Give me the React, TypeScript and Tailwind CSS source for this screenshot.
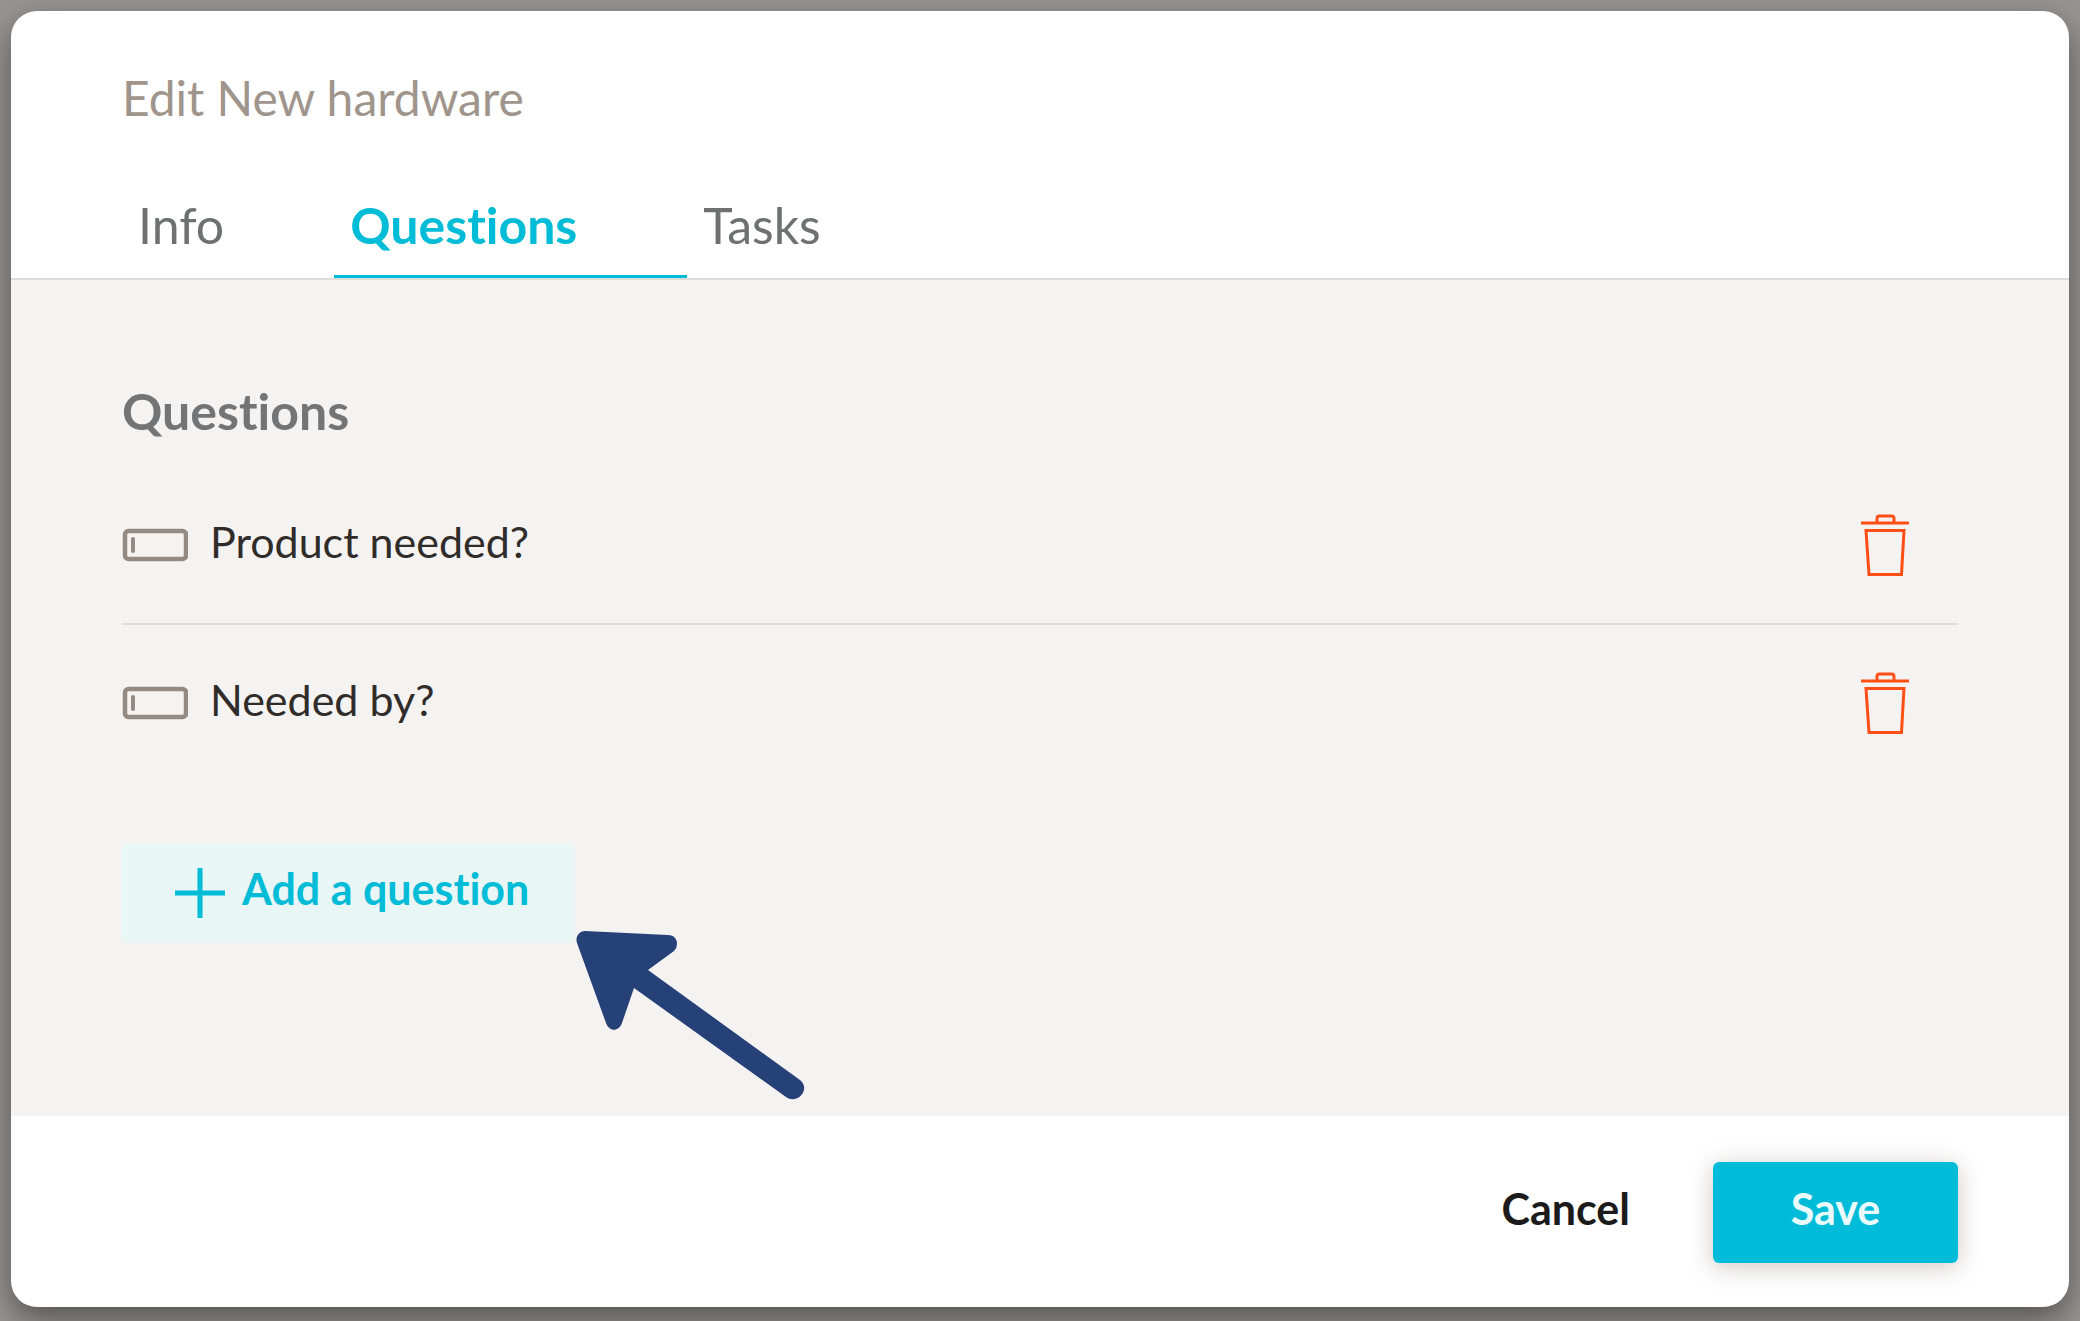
import { useState } from 'react'

type Question = {
  id: number
  label: string
}

const TABS = ['Info', 'Questions', 'Tasks']

const INITIAL_QUESTIONS: Question[] = [
  { id: 1, label: 'Product needed?' },
  { id: 2, label: 'Needed by?' },
]

function TextFieldIcon() {
  return (
    <svg className="h-[34px] w-[66px] shrink-0" viewBox="0 0 66 34" fill="none" stroke="#948a84" aria-hidden="true">
      <rect x="3" y="3" width="61" height="28" rx="3.5" strokeWidth="4.5" />
      <path d="M11 11v12" strokeWidth="4" strokeLinecap="round" />
    </svg>
  )
}

function TrashIcon() {
  return (
    <svg className="h-[64px] w-[50px]" viewBox="0 0 50 64" fill="none" stroke="#ff4f17" strokeWidth="3" aria-hidden="true">
      <path d="M1 10h48" />
      <path d="M17 10V5.500a2.500 2.500 0 0 1 2.500-2.500h12A2.500 2.500 0 0 1 34 5.500V10" />
      <path d="M6 17.500h38l-2.500 44H9z" />
    </svg>
  )
}

function PlusIcon() {
  return (
    <svg className="h-[52px] w-[52px]" viewBox="0 0 52 52" stroke="currentColor" strokeWidth="5" aria-hidden="true">
      <path d="M26 1v50M1 26h50" />
    </svg>
  )
}

// Hint arrow that points at the "Add a question" button
function PointerArrow() {
  return (
    <svg
      className="pointer-events-none absolute top-[88px] left-[454px] h-[170px] w-[230px]"
      viewBox="0 0 230 170"
      fill="#264178"
      aria-hidden="true"
    >
      <path d="M9 0L92 4C98 4 101 8 101 13Q101 17 98 20L72 39L224 149Q229 153 228 159C226 167 217 171 210 166L58 57L46 92C43 101 33 101 30 92L1 12C-1 6 3 0 9 0Z" />
    </svg>
  )
}

export default function App() {
  const [activeTab, setActiveTab] = useState('Questions')
  const [questions, setQuestions] = useState(INITIAL_QUESTIONS)

  function removeQuestion(id: number) {
    setQuestions(questions.filter((q) => q.id !== id))
  }

  function addQuestion() {
    setQuestions([...questions, { id: Date.now(), label: 'New question' }])
  }

  return (
    <div className="flex min-h-screen flex-col bg-[#989491] px-[11px] pt-[11px] pb-[14px] font-['Lato','Open_Sans',sans-serif] [font-variant-ligatures:none]">
      <div
        role="dialog"
        aria-labelledby="dialog-title"
        className="flex flex-1 flex-col overflow-hidden rounded-[26px] bg-white shadow-[0_12px_32px_rgba(0,0,0,0.45)]"
      >
        {/* Header */}
        <header className="border-b-2 border-[#dddcdb] px-[111px] pt-[59px]">
          <h1 id="dialog-title" className="text-[48px] leading-[56px] text-[#a0958c]">
            Edit New hardware
          </h1>
          <div role="tablist" className="mt-[44px] flex">
            {TABS.map((tab) => (
              <button
                key={tab}
                role="tab"
                aria-selected={tab === activeTab}
                onClick={() => setActiveTab(tab)}
                className={`h-[108px] border-b-[3px] pt-1 pr-[110px] pl-4 text-[50px] leading-[56px] ${
                  tab === activeTab
                    ? 'border-[#00bcd6] font-bold text-[#00bcd6]'
                    : 'border-transparent text-[#6f7071]'
                }`}
              >
                {tab}
              </button>
            ))}
          </div>
        </header>

        {/* Question list */}
        <main className="flex-1 bg-[#f5f3f2] px-[111px] pt-[103px]">
          <h2 className="text-[50px] leading-[56px] font-bold text-[#737475]">Questions</h2>
          <ul className="mt-7">
            {questions.map((q) => (
              <li
                key={q.id}
                className="flex h-[158px] items-center border-b-2 border-[#dfdbd7] last:border-transparent"
              >
                <TextFieldIcon />
                <span className="flex-1 pb-1.5 pl-[22px] text-[43px] leading-[48px] text-[#302c2a]">{q.label}</span>
                <button aria-label={`Delete ${q.label}`} onClick={() => removeQuestion(q.id)} className="mr-12">
                  <TrashIcon />
                </button>
              </li>
            ))}
          </ul>
          <div className="relative mt-[60px] flex">
            <button
              onClick={addQuestion}
              className="flex h-[100px] items-center gap-4 rounded-md bg-[#e9f6f6] pr-[46px] pl-[52px] text-[43px] leading-[48px] font-bold text-[#00bcd6]"
            >
              <PlusIcon />
              <span className="pb-2">Add a question</span>
            </button>
            <PointerArrow />
          </div>
        </main>

        {/* Actions */}
        <footer className="flex items-center justify-end gap-[83px] px-[111px] pt-[46px] pb-[44px]">
          <button className="pb-2 text-[43px] leading-[48px] font-bold text-[#1c1b1b]">Cancel</button>
          <button className="h-[101px] w-[245px] rounded-md bg-[#00bcd8] pb-2 text-[43px] leading-[48px] font-bold text-[#e9fbfd] shadow-[0_4px_24px_rgba(60,40,30,0.25)]">
            Save
          </button>
        </footer>
      </div>
    </div>
  )
}
